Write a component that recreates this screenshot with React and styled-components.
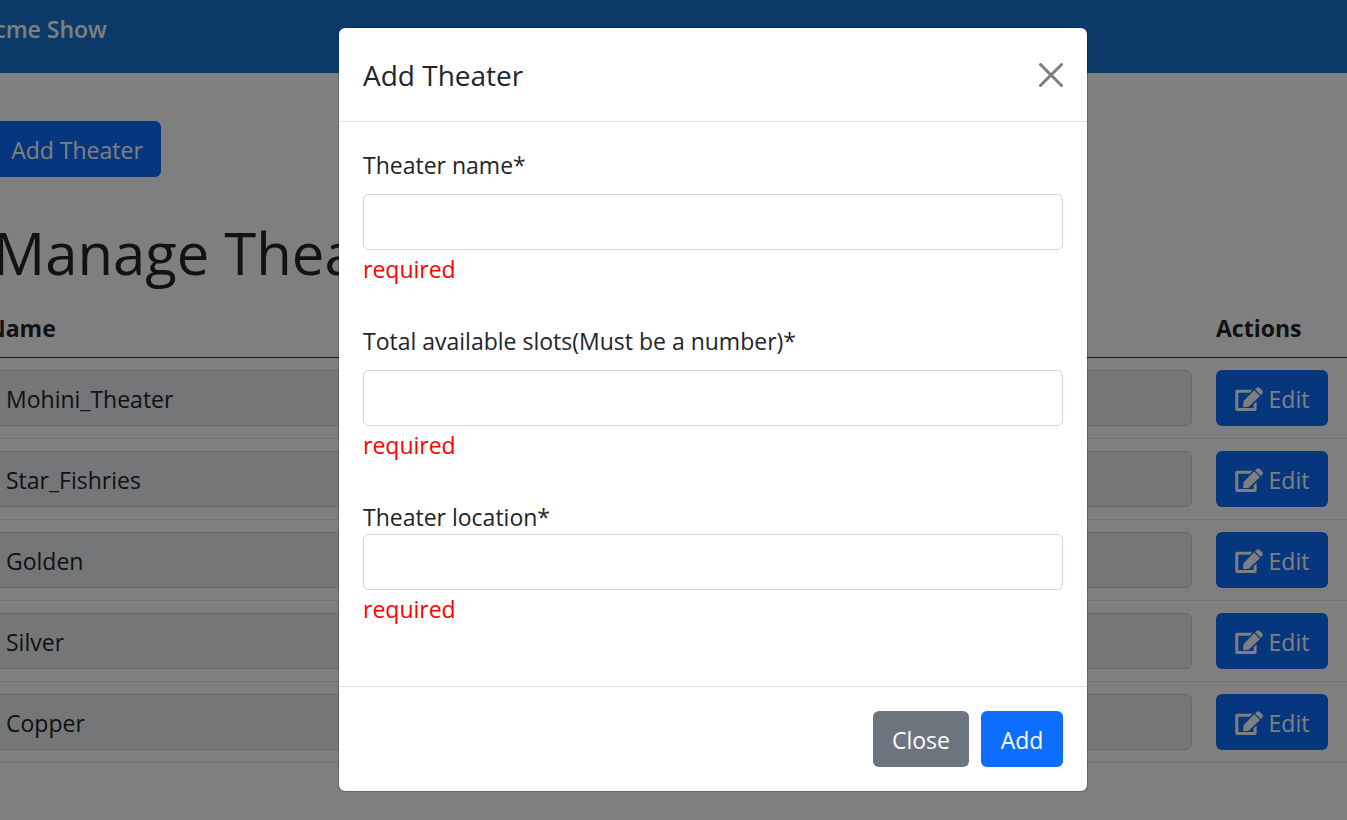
import React from "react";
import styled, { createGlobalStyle } from "styled-components";

const GlobalStyle = createGlobalStyle`
  *, *::before, *::after { box-sizing: border-box; }
  body {
    margin: 0;
    overflow: hidden;
    background: #fff;
    color: #212529;
    font-family: "Segoe UI", "Open Sans", "Noto Sans", sans-serif;
    font-size: 23px;
    line-height: 34px;
  }
  button, input { font: inherit; color: inherit; }
`;

const Frame = styled.div`
  position: relative;
  min-height: 100vh;
  margin: 0 -104px 0 -25px;
`;

const TopBar = styled.header`
  height: 73px;
  padding: 12px 4px;
  background: #1976d2;
`;

const Brand = styled.a`
  color: #fff;
  font-weight: 600;
  text-decoration: none;
`;

const Content = styled.main`
  padding-top: 48px;
`;

const Toolbar = styled.div`
  padding: 0 18px;
`;

const PageTitle = styled.h1`
  margin: 40px 0 8px;
  padding-left: 18px;
  font-size: 58px;
  line-height: 72px;
  font-weight: 400;
`;

const Button = styled.button`
  display: inline-flex;
  align-items: center;
  justify-content: center;
  gap: 6px;
  min-width: ${({ $width }) => $width}px;
  height: 56px;
  padding: 2px 18px 0;
  border: 0;
  border-radius: 6px;
  background: ${({ $secondary }) => ($secondary ? "#6c757d" : "#0d6efd")};
  color: #fff;
  white-space: nowrap;
  vertical-align: top;
  cursor: pointer;
`;

const Table = styled.table`
  width: 100%;
  table-layout: fixed;
  border-collapse: separate;
  border-spacing: 0;
`;

const HeadCell = styled.th`
  width: ${({ $width }) => $width || "auto"};
  padding: 14px 12px 12px;
  border-bottom: 1px solid #212529;
  font-weight: 700;
  text-align: left;
`;

const Cell = styled.td`
  padding: 12px;
  border-bottom: 1px solid #dee2e6;
  vertical-align: top;
`;

const TextInput = styled.input`
  display: block;
  width: 100%;
  height: 56px;
  padding: 2px 18px 0;
  border: 1px solid #ced4da;
  border-radius: 6px;
  background: #fff;
  outline: 0;

  &:read-only { background: #e9ecef; }
`;

const Backdrop = styled.div`
  position: absolute;
  inset: 0;
  display: flex;
  align-items: flex-start;
  justify-content: center;
  padding-top: 27px;
  background: rgba(0, 0, 0, 0.5);
`;

const Dialog = styled.section`
  width: 100%;
  max-width: 750px;
  border: 1px solid rgba(0, 0, 0, 0.2);
  border-radius: 7px;
  background: #fff;
  background-clip: padding-box;
`;

const DialogHeader = styled.header`
  display: flex;
  align-items: center;
  justify-content: space-between;
  padding: 24px;
  border-bottom: 1px solid #dee2e6;
`;

const DialogTitle = styled.h2`
  margin: 0;
  padding-top: 2px;
  font-size: 28px;
  line-height: 43px;
  font-weight: 400;
`;

const CloseIconButton = styled.button`
  display: flex;
  padding: 0;
  border: 0;
  background: none;
  color: #000;
  opacity: 0.5;
  cursor: pointer;
`;

const DialogBody = styled.div`
  display: grid;
  gap: 36px;
  padding: 24px 24px 60px;
`;

const Field = styled.div`
  display: flex;
  flex-direction: column;
`;

const Label = styled.label`
  margin-bottom: ${({ $tight }) => ($tight ? 0 : 12)}px;
  padding-top: 2px;
`;

const ErrorText = styled.span`
  padding-top: 2px;
  color: #f00;
`;

const DialogFooter = styled.footer`
  display: flex;
  justify-content: flex-end;
  gap: 12px;
  padding: 24px;
  border-top: 1px solid #dee2e6;
`;

function EditIcon() {
  return (
    <svg width="28" height="24" viewBox="0 0 28 24" fill="currentColor" aria-hidden="true">
      <path d="M2 2.7H17.6L14.6 5.7H3.3V20.9H18.6V17.3L21.6 14.4V22.2Q21.6 23.9 19.9 23.9H2Q.3 23.9 .3 22.2V4.4Q.3 2.7 2 2.7Z" />
      <path d="M19.2 3.3L25 9L14.2 19.2Q13.7 19.7 12.9 19.8L9.2 20.2Q8 20.2 8.1 19L8.5 15Q8.6 14.2 9.1 13.6Z" />
      <path d="M20.1 2.4L21.8.8Q23.1-.4 24.4.8L27.3 3.6Q28.4 4.9 27.3 6.4L25.8 8.1Z" />
    </svg>
  );
}

const theaters = ["Mohini_Theater", "Star_Fishries", "Golden", "Silver", "Copper"];

const fields = [
  { id: "name", label: "Theater name*" },
  { id: "slots", label: "Total available slots(Must be a number)*" },
  { id: "location", label: "Theater location*", tight: true },
];

export default function App() {
  return (
    <>
      <GlobalStyle />
      <Frame>
        <TopBar>
          <Brand href="#">Acme Show</Brand>
        </TopBar>
        <Content>
          <Toolbar>
            <Button type="button" $width={168}>Add Theater</Button>
          </Toolbar>
          <PageTitle>Manage Theaters</PageTitle>
          <Table>
            <thead>
              <tr>
                <HeadCell scope="col">Name</HeadCell>
                <HeadCell scope="col" $width="247px">Actions</HeadCell>
              </tr>
            </thead>
            <tbody>
              {theaters.map((name) => (
                <tr key={name}>
                  <Cell>
                    <TextInput aria-label="Name" value={name} readOnly />
                  </Cell>
                  <Cell>
                    <Button type="button" $width={112}>
                      <EditIcon />
                      Edit
                    </Button>
                  </Cell>
                </tr>
              ))}
            </tbody>
          </Table>
        </Content>
        <Backdrop>
          <Dialog role="dialog" aria-modal="true" aria-labelledby="dialog-title">
            <DialogHeader>
              <DialogTitle id="dialog-title">Add Theater</DialogTitle>
              <CloseIconButton type="button" aria-label="Close">
                <svg width="24" height="24" viewBox="0 0 16 16" fill="currentColor" aria-hidden="true">
                  <path d="M.293.293a1 1 0 0 1 1.414 0L8 6.586 14.293.293a1 1 0 1 1 1.414 1.414L9.414 8l6.293 6.293a1 1 0 0 1-1.414 1.414L8 9.414l-6.293 6.293a1 1 0 0 1-1.414-1.414L6.586 8 .293 1.707a1 1 0 0 1 0-1.414z" />
                </svg>
              </CloseIconButton>
            </DialogHeader>
            <DialogBody>
              {fields.map(({ id, label, tight }) => (
                <Field key={id}>
                  <Label htmlFor={id} $tight={tight}>{label}</Label>
                  <TextInput id={id} type="text" aria-describedby={`${id}-error`} />
                  <ErrorText id={`${id}-error`}>required</ErrorText>
                </Field>
              ))}
            </DialogBody>
            <DialogFooter>
              <Button type="button" $secondary $width={96}>Close</Button>
              <Button type="button" $width={82}>Add</Button>
            </DialogFooter>
          </Dialog>
        </Backdrop>
      </Frame>
    </>
  );
}
